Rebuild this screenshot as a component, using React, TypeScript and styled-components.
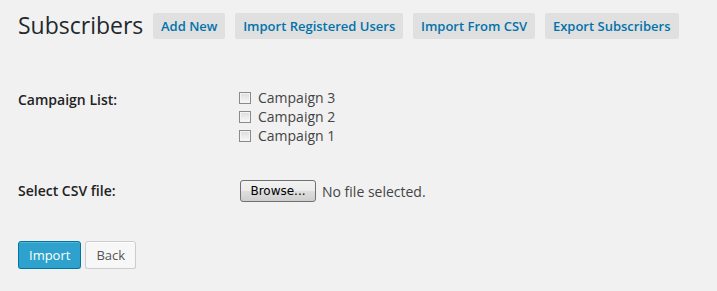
import styled, { createGlobalStyle } from 'styled-components';

const Global = createGlobalStyle`
  body {
    margin: 0;
    background: #f1f1f1;
    font-family: "Open Sans", sans-serif;
    color: #444;
  }
`

const Wrap = styled.div`
  padding: 11px 0 0 18px;
`

const Header = styled.div`
  display: flex;
  align-items: center;
  gap: 9.7px;
  height: 28px;
`

const Title = styled.h1`
  margin: 0;
  font-size: 23px;
  font-weight: 400;
  line-height: 29px;
  color: #23282d;
`

const TitleAction = styled.a`
  display: inline-block;
  height: 26px;
  line-height: 26px;
  padding: 0 8px;
  background: #e0e0e0;
  border-radius: 2px;
  color: #0073aa;
  font-size: 13px;
  font-weight: 600;
  text-decoration: none;
  margin-top: 1px;
`

const FormRow = styled.div<{ $top: number }>`
  display: flex;
  align-items: flex-start;
  margin-top: ${p => p.$top}px;
`

const Label = styled.div<{ $offset: number }>`
  width: 221px;
  flex: none;
  font-size: 14px;
  font-weight: 600;
  color: #222;
  line-height: 19px;
  padding-top: ${p => p.$offset}px;
`

const CheckList = styled.div`
  display: flex;
  flex-direction: column;
`

const CheckRow = styled.label`
  display: flex;
  align-items: center;
  gap: 7px;
  height: 19px;
  font-size: 14px;
  color: #444;
`

const Box = styled.span`
  width: 10px;
  height: 10px;
  border: 1px solid #8a8a8a;
  background: linear-gradient(#dcdcdc, #f8f8f8);
  box-shadow: inset 0 0 0 1px #f4f4f4;
  margin-top: 1px;
`

const FileField = styled.div`
  display: flex;
  align-items: center;
  gap: 6px;
  padding-left: 1px;
`

const BrowseButton = styled.span`
  box-sizing: border-box;
  width: 76px;
  height: 22px;
  display: flex;
  align-items: center;
  justify-content: center;
  border: 1px solid #707070;
  border-radius: 3px;
  background: linear-gradient(#f2f2f2 0%, #ebebeb 50%, #dddddd 51%, #cfcfcf 100%);
  font-family: "DejaVu Sans", "Liberation Sans", sans-serif;
  font-size: 12px;
  color: #000;
`

const FileStatus = styled.span`
  font-size: 14px;
  color: #444;
`

const Actions = styled.div`
  display: flex;
  gap: 4px;
  margin-top: 39px;
`

const Button = styled.button<{ $primary?: boolean }>`
  box-sizing: border-box;
  height: 28px;
  padding: 0 10px;
  border-radius: 3px;
  font-family: "Open Sans", sans-serif;
  font-size: 13px;
  line-height: 26px;
  border: 1px solid ${p => (p.$primary ? '#0074a2' : '#cccccc')};
  background: ${p => (p.$primary ? '#2ea2cc' : '#f7f7f7')};
  color: ${p => (p.$primary ? '#fff' : '#555')};
  box-shadow: ${p =>
    p.$primary
      ? 'inset 0 1px 0 rgba(120,200,230,.5), 0 1px 0 rgba(0,0,0,.15)'
      : 'inset 0 1px 0 #fff, 0 1px 0 rgba(0,0,0,.08)'};
`

const campaigns = ['Campaign 3', 'Campaign 2', 'Campaign 1']
const actions = ['Add New', 'Import Registered Users', 'Import From CSV', 'Export Subscribers']

export default function App() {
  return (
    <Wrap>
      <Global />
      <Header>
        <Title>Subscribers</Title>
        {actions.map(a => (
          <TitleAction key={a} href="#">{a}</TitleAction>
        ))}
      </Header>

      <FormRow $top={49}>
        <Label $offset={2}>Campaign List:</Label>
        <CheckList>
          {campaigns.map(c => (
            <CheckRow key={c}>
              <Box />
              {c}
            </CheckRow>
          ))}
        </CheckList>
      </FormRow>

      <FormRow $top={35}>
        <Label $offset={1}>Select CSV file:</Label>
        <FileField>
          <BrowseButton>Browse...</BrowseButton>
          <FileStatus>No file selected.</FileStatus>
        </FileField>
      </FormRow>

      <Actions>
        <Button $primary>Import</Button>
        <Button>Back</Button>
      </Actions>
    </Wrap>
  )
}
